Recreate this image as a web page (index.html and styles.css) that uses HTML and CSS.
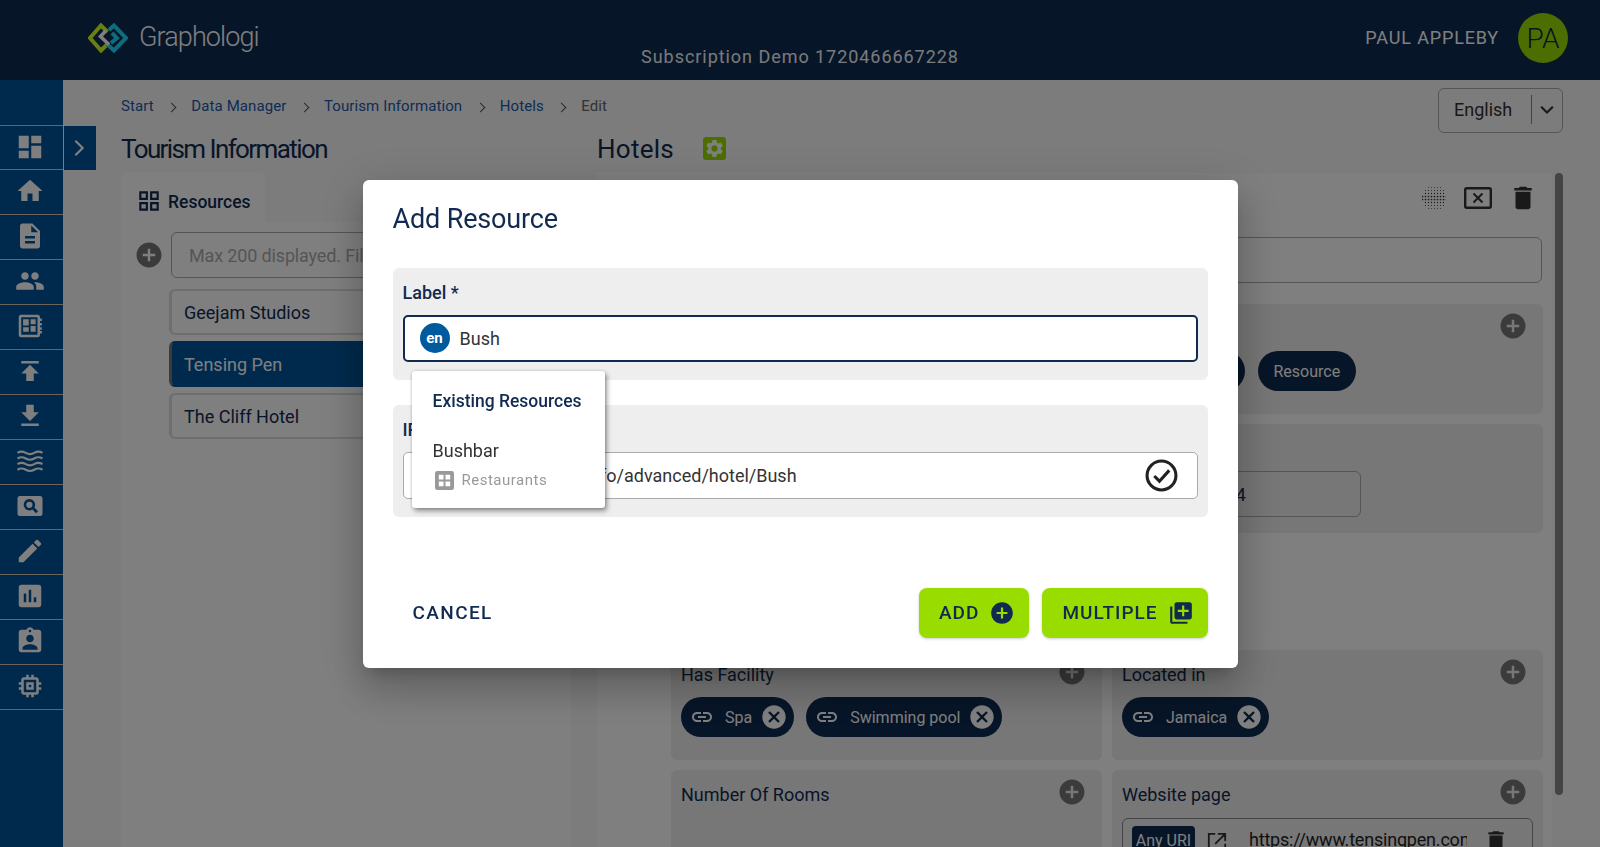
FILE: index.html
```html
<!DOCTYPE html>
<html lang="en">
<head>
<meta charset="utf-8">
<title>Graphologi</title>
<link rel="stylesheet" href="styles.css">
</head>
<body>
<svg class="sprite" aria-hidden="true">
  <symbol id="i-dashboard" viewBox="0 0 24 24"><path d="M3 13h8V3H3v10zm0 8h8v-6H3v6zm10 0h8V11h-8v10zm0-18v6h8V3h-8z"/></symbol>
  <symbol id="i-home" viewBox="0 0 24 24"><path d="M10 20v-6h4v6h5v-8h3L12 3 2 12h3v8z"/></symbol>
  <symbol id="i-doc" viewBox="0 0 24 24"><path d="M14 2H6c-1.1 0-1.99.9-1.99 2L4 20c0 1.1.89 2 1.99 2H18c1.1 0 2-.9 2-2V8l-6-6zm2 16H8v-2h8v2zm0-4H8v-2h8v2zm-3-5V3.5L18.5 9H13z"/></symbol>
  <symbol id="i-people" viewBox="0 0 24 24"><path d="M16 11c1.66 0 2.99-1.34 2.99-3S17.66 5 16 5c-1.66 0-3 1.34-3 3s1.34 3 3 3zm-8 0c1.66 0 2.99-1.34 2.99-3S9.66 5 8 5C6.34 5 5 6.34 5 8s1.34 3 3 3zm0 2c-2.33 0-7 1.17-7 3.5V19h14v-2.5c0-2.33-4.67-3.5-7-3.5zm8 0c-.29 0-.62.02-.97.05 1.16.84 1.97 1.97 1.97 3.45V19h6v-2.5c0-2.33-4.67-3.5-7-3.5z"/></symbol>
  <symbol id="i-board" viewBox="0 0 24 24"><path fill-rule="evenodd" d="M5 3h13a2 2 0 0 1 2 2v1h1.500v2H20v1.500h1.500v2H20V13h1.500v2H20v1h1.500v2H20v1a2 2 0 0 1-2 2H5a2 2 0 0 1-2-2V5a2 2 0 0 1 2-2zm0 2v14h13V5H5zm1.500 1.500h4.500v5H6.500v-5zm6 0h4v4h-4v-4zm-6 6.500h4.500v3.500H6.500V13zm6-1h4v4.500h-4V12z"/></symbol>
  <symbol id="i-publish" viewBox="0 0 24 24"><path d="M5 4v2h14V4H5zm0 10h4v6h6v-6h4l-7-7-7 7z"/></symbol>
  <symbol id="i-download" viewBox="0 0 24 24"><path d="M19 9h-4V3H9v6H5l7 7 7-7zM5 18v2h14v-2H5z"/></symbol>
  <symbol id="i-waves" viewBox="0 0 24 24"><g fill="none" stroke="currentColor" stroke-width="1.700"><path d="M2 5.500c2.500-1.500 4-1.500 6.600 0s4.300 1.500 6.800 0 4-1.500 6.600 0"/><path d="M2 10c2.500-1.500 4-1.500 6.600 0s4.300 1.500 6.800 0 4-1.500 6.600 0"/><path d="M2 14.500c2.500-1.500 4-1.500 6.600 0s4.300 1.500 6.800 0 4-1.500 6.600 0"/><path d="M2 19c2.500-1.500 4-1.500 6.600 0s4.300 1.500 6.800 0 4-1.500 6.600 0"/></g></symbol>
  <symbol id="i-search" viewBox="0 0 24 24"><path fill-rule="evenodd" d="M4 4h16a2 2 0 0 1 2 2v12a2 2 0 0 1-2 2H4a2 2 0 0 1-2-2V6a2 2 0 0 1 2-2zm7.500 2.500a4.500 4.500 0 1 0 2.400 8.300l2.900 2.900 1.600-1.600-2.900-2.900a4.500 4.500 0 0 0-4-6.700zm0 2a2.500 2.500 0 1 1 0 5 2.500 2.500 0 0 1 0-5z"/></symbol>
  <symbol id="i-edit" viewBox="0 0 24 24"><path d="M3 17.250V21h3.750L17.810 9.940l-3.750-3.750L3 17.250zM20.710 7.040c.39-.39.39-1.020 0-1.410l-2.340-2.340c-.39-.39-1.020-.39-1.410 0l-1.830 1.830 3.750 3.750 1.830-1.830z"/></symbol>
  <symbol id="i-chart" viewBox="0 0 24 24"><path d="M19 3H5c-1.100 0-2 .9-2 2v14c0 1.100.9 2 2 2h14c1.100 0 2-.9 2-2V5c0-1.100-.9-2-2-2zM9 17H7v-7h2v7zm4 0h-2V7h2v10zm4 0h-2v-4h2v4z"/></symbol>
  <symbol id="i-badge" viewBox="0 0 24 24"><path d="M19 3h-4.180C14.400 1.840 13.300 1 12 1c-1.300 0-2.400.84-2.820 2H5c-1.100 0-2 .9-2 2v14c0 1.100.9 2 2 2h14c1.100 0 2-.9 2-2V5c0-1.100-.9-2-2-2zm-7 0c.55 0 1 .45 1 1s-.45 1-1 1-1-.45-1-1 .45-1 1-1zm0 4c1.660 0 3 1.340 3 3s-1.340 3-3 3-3-1.340-3-3 1.340-3 3-3zm6 12H6v-1.400c0-2 4-3.100 6-3.100s6 1.100 6 3.100V19z"/></symbol>
  <symbol id="i-chip" viewBox="0 0 24 24"><path d="M15 9H9v6h6V9zm-2 4h-2v-2h2v2zm8-2V9h-2V7c0-1.100-.9-2-2-2h-2V3h-2v2h-2V3H9v2H7c-1.100 0-2 .9-2 2v2H3v2h2v2H3v2h2v2c0 1.100.9 2 2 2h2v2h2v-2h2v2h2v-2h2c1.100 0 2-.9 2-2v-2h2v-2h-2v-2h2zm-4 6H7V7h10v10z"/></symbol>
  <symbol id="i-plus" viewBox="0 0 24 24"><path d="M12 2C6.480 2 2 6.480 2 12s4.480 10 10 10 10-4.480 10-10S17.520 2 12 2zm5 11h-4v4h-2v-4H7v-2h4V7h2v4h4v2z"/></symbol>
  <symbol id="i-multi" viewBox="0 0 24 24"><path d="M4 6H2v14c0 1.100.9 2 2 2h14v-2H4V6zm16-4H8c-1.100 0-2 .9-2 2v12c0 1.100.9 2 2 2h12c1.100 0 2-.9 2-2V4c0-1.100-.9-2-2-2zm-1 9h-4v4h-2v-4H9V9h4V5h2v4h4v2z"/></symbol>
  <symbol id="i-link" viewBox="0 0 24 24"><path d="M3.900 12c0-1.710 1.390-3.100 3.100-3.100h4V7H7c-2.760 0-5 2.240-5 5s2.240 5 5 5h4v-1.900H7c-1.710 0-3.100-1.390-3.100-3.100zM8 13h8v-2H8v2zm9-6h-4v1.900h4c1.710 0 3.100 1.390 3.100 3.100s-1.390 3.100-3.100 3.100h-4V17h4c2.760 0 5-2.240 5-5s-2.240-5-5-5z"/></symbol>
  <symbol id="i-cancel" viewBox="0 0 24 24"><path d="M12 2C6.470 2 2 6.470 2 12s4.470 10 10 10 10-4.470 10-10S17.530 2 12 2zm5 13.590L15.590 17 12 13.410 8.410 17 7 15.590 10.590 12 7 8.410 8.410 7 12 10.590 15.590 7 17 8.410 13.410 12 17 15.590z"/></symbol>
  <symbol id="i-delete" viewBox="0 0 24 24"><path d="M6 19c0 1.100.9 2 2 2h8c1.100 0 2-.9 2-2V7H6v12zM19 4h-3.500l-1-1h-5l-1 1H5v2h14V4z"/></symbol>
  <symbol id="i-grid" viewBox="0 0 24 24"><path d="M3 3v8h8V3H3zm6 6H5V5h4v4zm-6 4v8h8v-8H3zm6 6H5v-4h4v4zm4-16v8h8V3h-8zm6 6h-4V5h4v4zm-6 4v8h8v-8h-8zm6 6h-4v-4h4v4z"/></symbol>
  <symbol id="i-gear" viewBox="0 0 24 24"><path d="M19.140 12.940c.04-.3.06-.61.06-.94 0-.32-.02-.64-.07-.94l2.030-1.580c.18-.14.23-.41.12-.61l-1.920-3.320c-.12-.22-.37-.29-.59-.22l-2.390.96c-.5-.38-1.030-.7-1.620-.94l-.36-2.540c-.04-.24-.24-.41-.48-.41h-3.840c-.24 0-.43.17-.47.41l-.36 2.540c-.59.24-1.130.57-1.620.94l-2.390-.96c-.22-.08-.47 0-.59.22L2.740 8.870c-.12.21-.08.47.12.61l2.030 1.580c-.05.3-.09.63-.09.94s.02.64.07.94l-2.030 1.580c-.18.14-.23.41-.12.61l1.920 3.320c.12.22.37.29.59.22l2.390-.96c.5.38 1.030.7 1.620.94l.36 2.540c.05.24.24.41.48.41h3.840c.24 0 .44-.17.47-.41l.36-2.540c.59-.24 1.130-.56 1.620-.94l2.390.96c.22.08.47 0 .59-.22l1.920-3.320c.12-.22.07-.47-.12-.61l-2.010-1.580zM12 15.600c-1.980 0-3.600-1.620-3.600-3.600s1.620-3.600 3.600-3.600 3.600 1.620 3.600 3.600-1.620 3.600-3.600 3.600z"/></symbol>
</svg>

<div class="page">
  <header class="topbar">
    <div class="brand">
      <svg class="logo" viewBox="0 0 40 30" aria-hidden="true">
        <path d="M19.500 9L13 2.500 2 15l11 12.500 6-6" fill="none" stroke="#d4ff24" stroke-width="4"/>
        <path d="M21 7l5-4.500L38 15 26 27.500l-7-6.500M24 10l5 5-6 5" fill="none" stroke="#1cd8ff" stroke-width="4"/>
        <path d="M18 7.500L12.500 13.500 21 21.500" fill="none" stroke="#fff" stroke-width="3.600"/>
      </svg>
      <span class="brand-name">Graphologi</span>
    </div>
    <div class="subscription">Subscription Demo 1720466667228</div>
    <div class="account">
      <span class="account-name">PAUL APPLEBY</span>
      <span class="avatar">PA</span>
    </div>
  </header>

  <div class="workspace">
    <nav class="sidebar">
      <a class="nav-item"><svg class="nav-icon"><use href="#i-dashboard"/></svg></a>
      <a class="nav-item"><svg class="nav-icon"><use href="#i-home"/></svg></a>
      <a class="nav-item"><svg class="nav-icon"><use href="#i-doc"/></svg></a>
      <a class="nav-item"><svg class="nav-icon"><use href="#i-people"/></svg></a>
      <a class="nav-item"><svg class="nav-icon"><use href="#i-board"/></svg></a>
      <a class="nav-item"><svg class="nav-icon"><use href="#i-publish"/></svg></a>
      <a class="nav-item"><svg class="nav-icon"><use href="#i-download"/></svg></a>
      <a class="nav-item"><svg class="nav-icon"><use href="#i-waves"/></svg></a>
      <a class="nav-item"><svg class="nav-icon"><use href="#i-search"/></svg></a>
      <a class="nav-item"><svg class="nav-icon"><use href="#i-edit"/></svg></a>
      <a class="nav-item"><svg class="nav-icon"><use href="#i-chart"/></svg></a>
      <a class="nav-item"><svg class="nav-icon"><use href="#i-badge"/></svg></a>
      <a class="nav-item"><svg class="nav-icon"><use href="#i-chip"/></svg></a>
    </nav>
    <button class="expander" aria-label="Expand"><svg viewBox="0 0 24 24"><path d="M8 4l8 8-8 8" fill="none" stroke="#fff" stroke-width="2.400"/></svg></button>

    <main class="content">
      <div class="crumb-row">
        <ol class="crumbs">
          <li class="crumb"><a>Start</a></li>
          <li class="crumb"><a>Data Manager</a></li>
          <li class="crumb"><a>Tourism Information</a></li>
          <li class="crumb"><a>Hotels</a></li>
          <li class="crumb crumb-current">Edit</li>
        </ol>
        <div class="lang">
          <span class="lang-value">English</span>
          <svg class="lang-chevron" viewBox="0 0 24 24"><path d="M5 8l7 7 7-7" fill="none" stroke="#333" stroke-width="2.600"/></svg>
        </div>
      </div>

      <div class="columns">
        <section class="col-left">
          <h2 class="page-title page-title-left">Tourism Information</h2>
          <div class="tab"><svg class="tab-icon"><use href="#i-grid"/></svg>Resources</div>
          <div class="left-panel">
            <div class="search-row">
              <svg class="plus"><use href="#i-plus"/></svg>
              <div class="search">Max 200 displayed. Filter to find more</div>
            </div>
            <ul class="res-list">
              <li class="res-item">Geejam Studios</li>
              <li class="res-item res-selected">Tensing Pen</li>
              <li class="res-item">The Cliff Hotel</li>
            </ul>
          </div>
        </section>

        <section class="col-right">
          <div class="title-row">
            <h2 class="page-title">Hotels</h2>
            <span class="gear-btn"><svg class="gear"><use href="#i-gear"/></svg></span>
          </div>
          <div class="right-wrap">
            <div class="right-panel">
              <div class="tools">
                <svg class="tool-dots" viewBox="0 0 24 24" aria-hidden="true">
                  <g stroke="#333" stroke-linecap="round" stroke-dasharray="0 3">
                    <line x1="6.500" x2="19" y1="1.500" y2="1.500" stroke-width=".8"/>
                    <line x1="3.500" x2="22" y1="4.500" y2="4.500" stroke-width="1"/>
                    <line x1="3.500" x2="22" y1="7.500" y2="7.500" stroke-width="1.300"/>
                    <line x1=".5" x2="25" y1="10.500" y2="10.500" stroke-width="1.700"/>
                    <line x1=".5" x2="25" y1="13.500" y2="13.500" stroke-width="1.700"/>
                    <line x1="3.500" x2="22" y1="16.500" y2="16.500" stroke-width="1.300"/>
                    <line x1="3.500" x2="22" y1="19.500" y2="19.500" stroke-width="1"/>
                    <line x1="6.500" x2="19" y1="22.500" y2="22.500" stroke-width=".8"/>
                  </g>
                </svg>
                <svg class="tool-box" viewBox="0 0 28 22" aria-hidden="true"><rect x="1.200" y="1.200" width="25.600" height="19.600" rx="1.500" fill="none" stroke="#333" stroke-width="2.400"/><path d="M9.500 6.500l9 9m0-9l-9 9" stroke="#333" stroke-width="2"/></svg>
                <svg class="tool-trash"><use href="#i-delete"/></svg>
              </div>
              <div class="wide-input"></div>
              <div class="cards">
                <div class="card"></div>
                <div class="card">
                  <div class="card-head"><span>Type</span><svg class="plus"><use href="#i-plus"/></svg></div>
                  <div class="chips">
                    <span class="chip chip-hidden">Hotel</span>
                    <span class="chip chip-plain">Resource</span>
                  </div>
                </div>
                <div class="card"></div>
                <div class="card">
                  <div class="card-head"><span>Star Rating</span></div>
                  <div class="field-short">18.26642124</div>
                </div>
                <div class="card card-gap"></div>
                <div class="card-spacer"></div>
                <div class="card">
                  <div class="card-head"><span>Has Facility</span><svg class="plus"><use href="#i-plus"/></svg></div>
                  <div class="chips chips-linked">
                    <span class="chip"><svg class="chip-link"><use href="#i-link"/></svg>Spa<svg class="chip-x"><use href="#i-cancel"/></svg></span>
                    <span class="chip"><svg class="chip-link"><use href="#i-link"/></svg>Swimming pool<svg class="chip-x"><use href="#i-cancel"/></svg></span>
                  </div>
                </div>
                <div class="card">
                  <div class="card-head"><span>Located in</span><svg class="plus"><use href="#i-plus"/></svg></div>
                  <div class="chips chips-linked">
                    <span class="chip"><svg class="chip-link"><use href="#i-link"/></svg>Jamaica<svg class="chip-x"><use href="#i-cancel"/></svg></span>
                  </div>
                </div>
                <div class="card card-tall">
                  <div class="card-head"><span>Number Of Rooms</span><svg class="plus"><use href="#i-plus"/></svg></div>
                </div>
                <div class="card card-tall">
                  <div class="card-head"><span>Website page</span><svg class="plus"><use href="#i-plus"/></svg></div>
                  <div class="uri-box">
                    <span class="uri-tag">Any URI</span>
                    <svg class="uri-open" viewBox="0 0 22 22" aria-hidden="true"><path d="M9 2H2v18h18v-7M12 2h8v8M20 2L9 13" fill="none" stroke="#333" stroke-width="2"/></svg>
                    <span class="uri-text">https://www.tensingpen.com/</span>
                    <svg class="uri-trash"><use href="#i-delete"/></svg>
                  </div>
                </div>
              </div>
            </div>
            <div class="scrollbar"></div>
          </div>
        </section>
      </div>
    </main>
  </div>
</div>

<div class="backdrop">
  <div class="modal" role="dialog" aria-label="Add Resource">
    <h1 class="modal-title">Add Resource</h1>
    <div class="field">
      <label class="field-label">Label *</label>
      <div class="field-input field-focus">
        <span class="lang-badge">en</span>
        <span class="field-text">Bush</span>
      </div>
      <div class="popup">
        <div class="popup-head">Existing Resources</div>
        <div class="popup-name">Bushbar</div>
        <div class="popup-type">
          <svg class="popup-icon" viewBox="0 0 20 20" aria-hidden="true"><rect width="20" height="20" rx="2.500" fill="#999"/><path d="M4 4h5v5H4zM11 4h5v5h-5zM4 11h5v5H4zM11 11h5v5h-5z" fill="#fff"/></svg>
          Restaurants
        </div>
      </div>
    </div>
    <div class="field field-iri">
      <label class="field-label">IRI *</label>
      <div class="field-input">
        <span class="field-text iri-text">http://tourism.info/advanced/hotel/Bush</span>
        <svg class="check" viewBox="0 0 32 32" aria-hidden="true"><circle cx="16" cy="16" r="14" fill="none" stroke="#222" stroke-width="3"/><path d="M9 16.500l5 5 9.500-10.500" fill="none" stroke="#222" stroke-width="3"/></svg>
      </div>
    </div>
    <div class="modal-actions">
      <button class="btn-text">CANCEL</button>
      <div class="btn-group">
        <button class="btn-primary">ADD<svg class="btn-icon"><use href="#i-plus"/></svg></button>
        <button class="btn-primary">MULTIPLE<svg class="btn-icon"><use href="#i-multi"/></svg></button>
      </div>
    </div>
  </div>
</div>
</body>
</html>
```

FILE: styles.css
```css
* { box-sizing: border-box; }
html, body { height: 100%; }
body {
  margin: 0;
  overflow: hidden;
  font-family: Roboto, "Liberation Sans", sans-serif;
  font-size: 18px;
  color: #112a50;
  background: #f8f8f8;
}
.sprite { display: none; }
svg { fill: currentColor; flex: none; }
ol, ul { list-style: none; margin: 0; padding: 0; }
h1, h2 { margin: 0; font-weight: 400; }
button { font: inherit; border: 0; background: none; color: inherit; padding: 0; }

.page { height: 847px; display: flex; flex-direction: column; overflow: hidden; }

/* top bar */
.topbar {
  height: 80px;
  flex: none;
  background: #0e2a50;
  color: #fff;
  display: grid;
  grid-template-columns: 1fr auto 1fr;
  padding: 0 32px 0 32px;
}
.brand { display: flex; align-items: center; gap: 11px; height: 76px; padding-left: 56px; }
.logo { width: 40px; height: 30px; }
.brand-name { font-size: 27px; font-weight: 300; letter-spacing: -0.9px; margin-bottom: 2px; }
.subscription { padding-top: 46px; font-size: 18px; letter-spacing: .95px; opacity: .95; }
.account { display: flex; justify-content: flex-end; align-items: center; gap: 19px; height: 76px; }
.account-name { font-size: 18px; letter-spacing: .85px; margin-bottom: 2px; }
.avatar {
  width: 50px; height: 50px; border-radius: 50%;
  background: #99dd00; color: #112a50;
  display: flex; align-items: center; justify-content: center;
  font-size: 28px; font-weight: 300;
}

/* sidebar */
.workspace { flex: 1; display: flex; min-height: 0; position: relative; }
.sidebar { width: 63px; flex: none; background: #00549a; padding-top: 45px; }
.nav-item {
  height: 45px; display: flex; align-items: center; justify-content: center;
  border-bottom: 1px solid #d8c8b0; color: #fff; padding: 0 3px 2px 0;
}
.nav-item:first-child { border-top: 1px solid #d8c8b0; }
.nav-icon { width: 30px; height: 30px; }
.expander {
  position: absolute; left: 64px; top: 46px; width: 32px; height: 44px;
  background: #00549a; display: flex; align-items: center; justify-content: center; padding-right: 2px;
}
.expander svg { width: 22px; height: 22px; }

/* content */
.content { flex: 1; min-width: 0; padding: 8px 37px 0 58px; display: flex; flex-direction: column; }
.crumb-row { display: flex; justify-content: space-between; align-items: flex-start; height: 45px; flex: none; }
.crumbs { display: flex; align-items: center; height: 36px; font-size: 15px; letter-spacing: .1px; }
.crumb a { color: #1d5aa8; }
.crumb { display: flex; align-items: center; }
.crumb:not(:last-child)::after {
  content: "";
  width: 6px; height: 6px;
  border-top: 1.500px solid #555; border-right: 1.500px solid #555;
  transform: rotate(45deg);
  margin: 3px 16px 0 14.500px;
}
.crumb-current { color: #666; }
.lang {
  width: 125px; height: 45px;
  border: 1px solid #aaa; border-radius: 6px;
  display: flex; align-items: center; position: relative;
  padding: 0 0 2px 15px; color: #333;
}
.lang-value { width: 77px; }
.lang-chevron { width: 20px; height: 20px; margin-left: 6px; }
.lang::after {
  content: ""; position: absolute; left: 92px; top: 6px; bottom: 8px;
  border-left: 1px solid #888;
}
.columns { flex: 1; display: flex; min-height: 0; }
.page-title { font-size: 26px; line-height: 32px; color: #112a50; letter-spacing: .25px; }
.page-title-left { letter-spacing: -1.600px; }

.col-left { width: 450px; flex: none; margin-right: 26px; display: flex; flex-direction: column; }
.col-left > .page-title { height: 39px; }
.tab {
  width: 144px; height: 50px; flex: none;
  background: #fff; border-radius: 6px 6px 0 0;
  display: flex; align-items: center; gap: 6px; padding: 10px 0 0 15px;
  font-weight: 500; font-size: 17.500px;
}
.tab-icon { width: 26px; height: 26px; margin-bottom: 2px; }
.left-panel { flex: 1; background: #fff; padding: 10px 0 0 13px; }
.search-row { display: flex; align-items: center; gap: 7px; }
.plus { width: 30px; height: 30px; color: #777; }
.search {
  flex: 1; height: 46px; border: 1px solid #aaa; border-radius: 6px;
  padding: 0 17px; display: flex; align-items: center; color: #aaa; white-space: nowrap; letter-spacing: -.15px;
}
.res-list { margin: 11px 0 0 35px; display: flex; flex-direction: column; gap: 6px; }
.res-item {
  height: 46px; border: 2px solid #ddd; border-left-width: 3px; border-radius: 6px;
  padding-left: 12px; display: flex; align-items: center;
}
.res-selected { background: #00549a; color: #fff; border-color: #00549a; border-left-color: #777; }

.col-right { flex: 1; min-width: 0; display: flex; flex-direction: column; }
.title-row { display: flex; gap: 29px; height: 40px; flex: none; }
.gear-btn {
  width: 23px; height: 23px; margin-top: 4px; border-radius: 3px; background: #99dd00;
  display: flex; align-items: center; justify-content: center; color: #fff;
}
.gear { width: 21px; height: 21px; }
.right-wrap { flex: 1; display: flex; gap: 3px; min-height: 0; }
.right-panel { flex: 1; min-width: 0; background: #fff; padding: 0 10px 0 74px; overflow: hidden; }
.scrollbar { width: 8px; height: 622px; background: #888; border-radius: 4px; flex: none; }
.tools { height: 64px; display: flex; align-items: center; justify-content: flex-end; gap: 16px; padding: 0 4px 14px 0; color: #333; }
.tool-dots { width: 24px; height: 24px; margin-right: 2px; }
.tool-box { width: 28px; height: 22px; }
.tool-trash { width: 30px; height: 30px; }
.wide-input { height: 46px; border: 1px solid #aaa; border-radius: 6px; margin-bottom: 21px; }
.cards { display: grid; grid-template-columns: 431px 431px; grid-template-rows: 110px 109px 97px 110px 200px; column-gap: 10px; row-gap: 10px; }
.card { background: #eee; border-radius: 6px; padding: 9px 10px; }
.card-head { display: flex; justify-content: space-between; align-items: flex-start; font-size: 18px; }
.card-head span { line-height: 30px; margin-top: 1px; }
.card-head .plus { margin-right: 5px; margin-top: -2px; }
.chips { display: flex; gap: 13px; margin-top: 7px; }
.chips-linked { gap: 12px; }
.chip {
  height: 40px; border-radius: 20px; background: #0e2a50; color: #fff;
  display: flex; align-items: center; font-size: 16px; padding: 0 6px 0 9px; white-space: nowrap;
}
.chip-link { width: 24px; height: 24px; margin-right: 11px; }
.chip-x { width: 28px; height: 28px; margin-left: 8px; }
.chip-plain { padding: 0 15.500px; }
.chip-hidden { width: 123px; }
.field-short {
  width: 239px; height: 46px; border: 1px solid #aaa; border-radius: 6px;
  margin-top: 7px; padding-left: 17px; display: flex; align-items: center;
}
.uri-box {
  border: 1px solid #888; border-radius: 6px; height: 60px; margin-top: 8px;
  padding: 7px 9px; display: flex; align-items: flex-start; color: #222;
}
.uri-tag { background: #0e2a50; color: #fff; font-size: 16px; height: 30px; line-height: 30px; width: 63px; text-align: center; border-radius: 4px; }
.uri-open { width: 20px; height: 20px; margin: 6px 0 0 12px; }
.uri-text { width: 218px; overflow: hidden; white-space: nowrap; margin: 3px 0 0 22px; letter-spacing: -.2px; }
.uri-trash { width: 26px; height: 26px; margin: 2px 0 0 16px; color: #333; }

/* dialog */
.backdrop {
  position: fixed; inset: 0; background: rgba(0,0,0,.5);
  display: flex; align-items: center; justify-content: center;
}
.modal {
  width: 875px; height: 488px; background: #fff; border-radius: 6px; padding: 0 30px;
  box-shadow: 0 11px 15px -7px rgba(0,0,0,.2), 0 24px 38px 3px rgba(0,0,0,.14), 0 9px 46px 8px rgba(0,0,0,.12);
  display: flex; flex-direction: column;
}
.modal-title { font-size: 27px; line-height: 34px; padding-top: 22px; height: 88px; color: #112a50; letter-spacing: -.15px; }
.field { position: relative; background: #eee; border-radius: 6px; height: 112px; padding: 10px 10px 18px; flex: none; }
.field-iri { margin-top: 25px; }
.field-label { display: block; height: 37px; line-height: 29px; font-weight: 500; font-size: 18px; }
.field-input {
  height: 47px; background: #fff; border: 1px solid #aaa; border-radius: 5px;
  display: flex; align-items: center; padding-left: 15px; color: #333;
}
.field-focus { border: 2px solid #112a50; }
.lang-badge {
  width: 30px; height: 30px; border-radius: 50%; background: #005a9e; color: #fff;
  display: flex; align-items: center; justify-content: center; font-size: 15px; font-weight: 700; margin-right: 10px;
}
.iri-text { padding-left: 52px; flex: 1; }
.check { width: 33px; height: 33px; margin-right: 19px; }
.popup {
  position: absolute; left: 19px; top: 103px; width: 193px; height: 137px;
  background: #fff; border-radius: 3px; padding: 18px 21px; z-index: 2;
  box-shadow: 2px 3px 5px rgba(0,0,0,.4), 0 0 3px rgba(0,0,0,.2);
}
.popup-head { font-size: 17.500px; font-weight: 500; line-height: 24px; color: #112a50; white-space: nowrap; }
.popup-name { font-size: 18px; line-height: 24px; margin-top: 26px; color: #333; }
.popup-type { display: flex; align-items: center; gap: 8px; font-size: 15px; letter-spacing: .5px; color: #999; margin-top: 8px; padding-left: 2px; }
.popup-icon { width: 19px; height: 19px; }
.modal-actions { margin-top: 71px; display: flex; justify-content: space-between; align-items: center; }
.btn-text { padding: 0 20px; font-size: 19px; font-weight: 500; letter-spacing: 1.400px; color: #112a50; }
.btn-group { display: flex; gap: 13px; }
.btn-primary {
  height: 50px; padding: 0 14px 0 20px; border-radius: 8px; background: #99dd00; color: #112a50;
  display: flex; align-items: center; gap: 10px; font-size: 19px; font-weight: 500; letter-spacing: 1px;
  box-shadow: 0 1px 3px rgba(0,0,0,.2);
}
.btn-icon { width: 26px; height: 26px; }
```
